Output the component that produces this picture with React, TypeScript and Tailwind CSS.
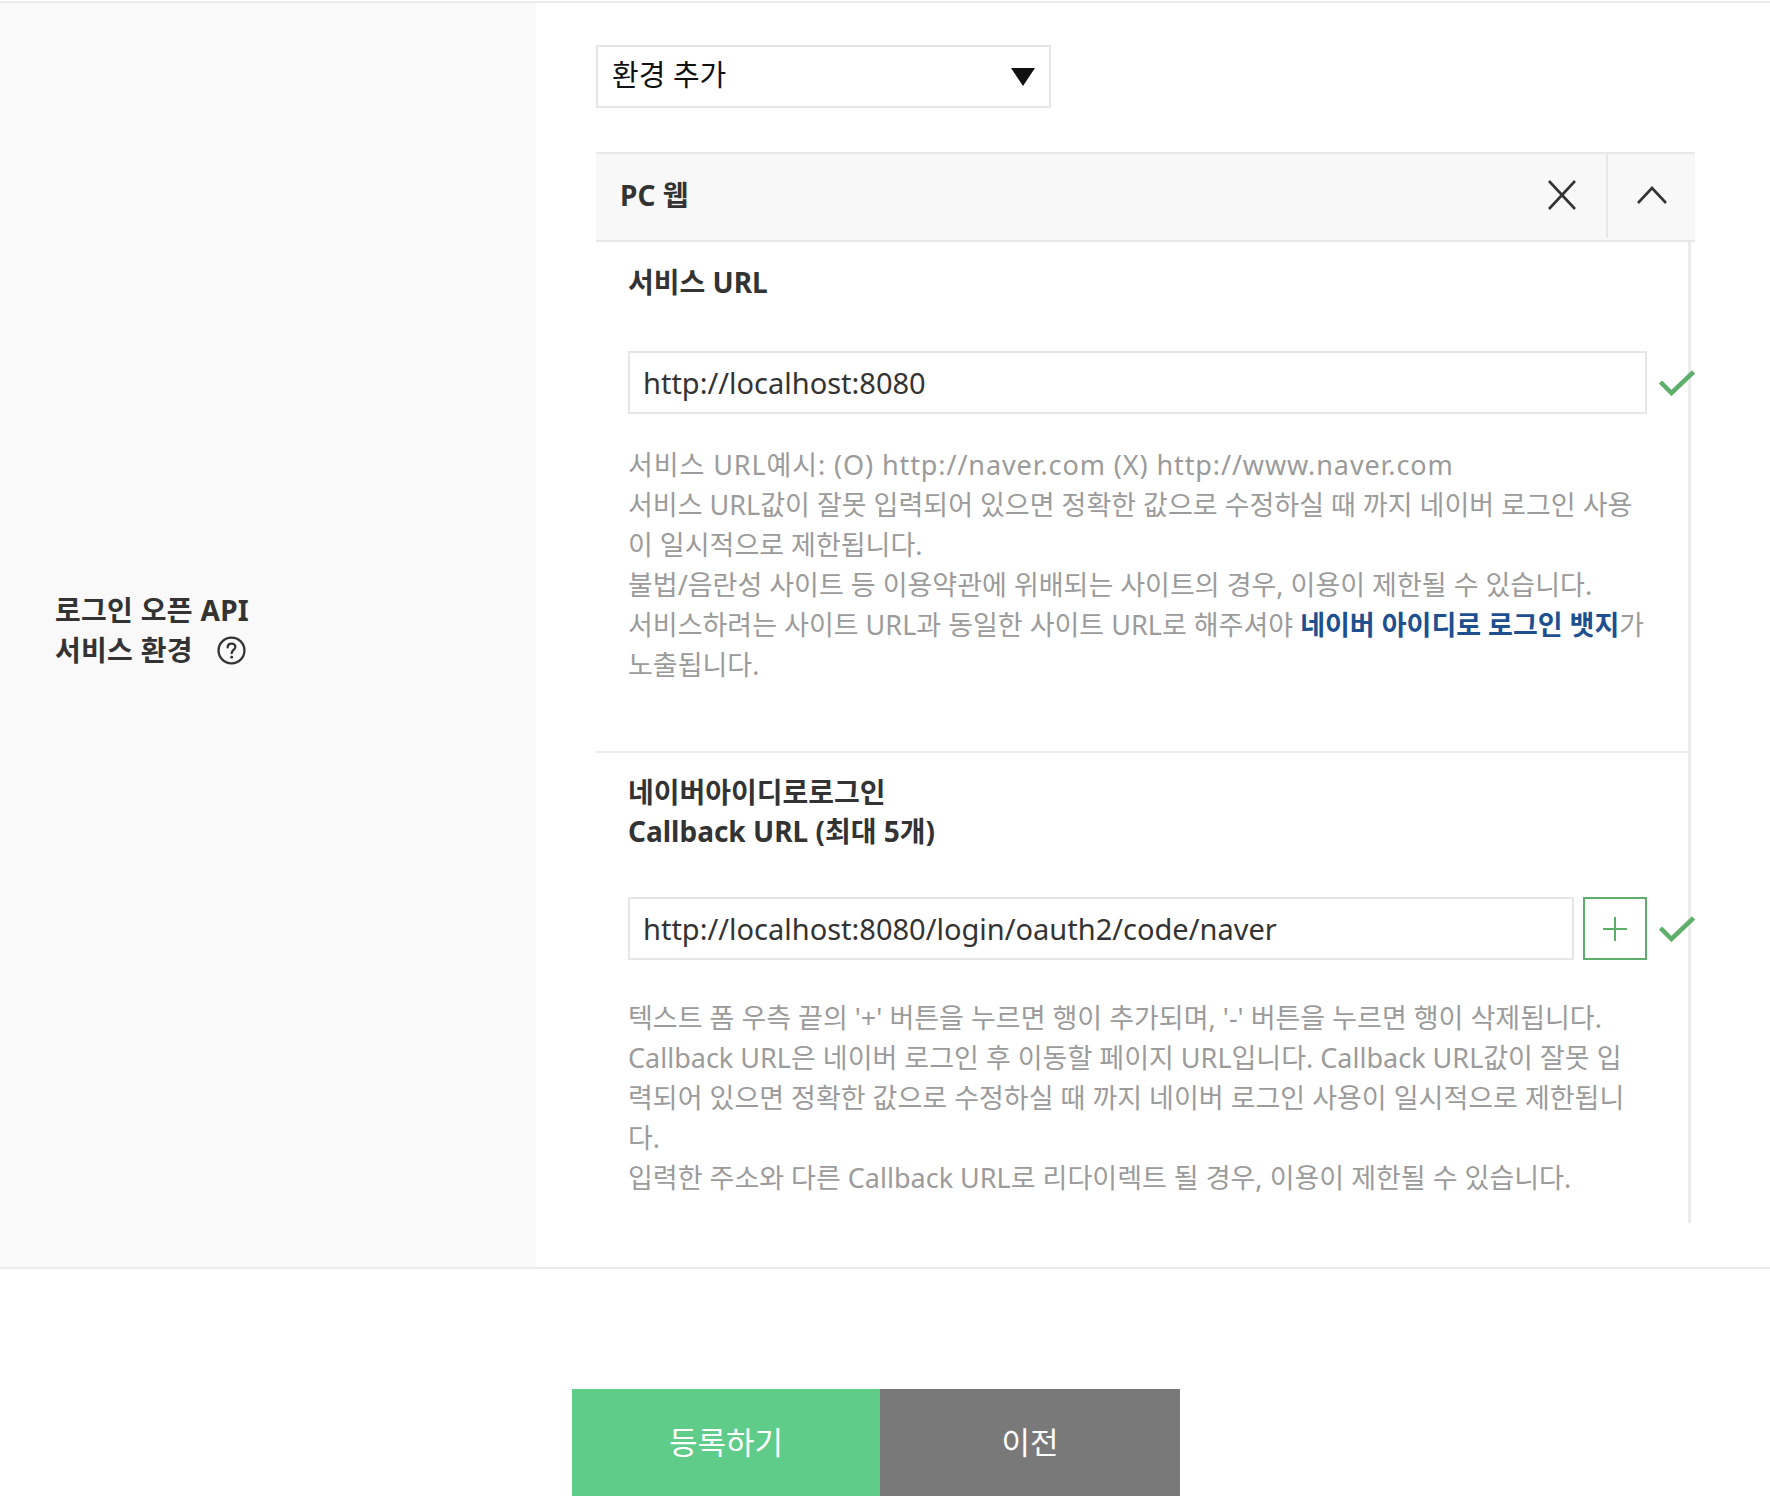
import React from "react";

const CheckMark = () => (
  <svg className="shrink-0" width="36" height="26" viewBox="0 0 36 26" fill="none">
    <path d="M1.5 12 L12.5 23 L34.5 2" stroke="#5fae6c" strokeWidth="4.5" />
  </svg>
);

const desc1 = [
  "서비스 URL값이 잘못 입력되어 있으면 정확한 값으로 수정하실 때 까지 네이버 로그인 사용",
  "이 일시적으로 제한됩니다.",
  "불법/음란성 사이트 등 이용약관에 위배되는 사이트의 경우, 이용이 제한될 수 있습니다.",
];

const desc2 = [
  "텍스트 폼 우측 끝의 '+' 버튼을 누르면 행이 추가되며, '-' 버튼을 누르면 행이 삭제됩니다.",
  "Callback URL은 네이버 로그인 후 이동할 페이지 URL입니다. Callback URL값이 잘못 입",
  "력되어 있으면 정확한 값으로 수정하실 때 까지 네이버 로그인 사용이 일시적으로 제한됩니",
  "다.",
  "입력한 주소와 다른 Callback URL로 리다이렉트 될 경우, 이용이 제한될 수 있습니다.",
];

export default function App() {
  return (
    <div className="w-[1770px] min-h-[1498px] bg-white text-[#333] font-['Noto_Sans','Noto_Sans_CJK_KR',sans-serif]">
      <div className="mt-px flex border-t-2 border-b-2 border-[#ebebeb]">
        {/* Left label */}
        <div className="w-[536px] shrink-0 bg-[#f9f9f9] flex items-center pl-[55px] pb-[10px]">
          <div className="text-[28px] font-bold leading-[40px] tracking-[0.3px]">
            <div>로그인 오픈 API</div>
            <div className="flex items-center">
              서비스 환경
              <svg className="ml-[24px]" width="29" height="29" viewBox="0 0 28 28" fill="none">
                <circle cx="14" cy="14" r="12.5" stroke="#333" strokeWidth="2.2" />
                <path d="M10.3 11 C10.3 8.6 12 7.4 14 7.4 C16.1 7.4 17.7 8.7 17.7 10.7 C17.7 13.4 14.2 13.6 14.2 16.6" stroke="#333" strokeWidth="2.2" strokeLinecap="round" />
                <circle cx="14.2" cy="20.4" r="1.4" fill="#333" />
              </svg>
            </div>
          </div>
        </div>

        {/* Right form */}
        <div className="flex-1 pl-[60px] pr-[75px] pt-[42px] pb-[44px]">
          <div className="w-[455px] h-[63px] border-2 border-[#e6e6e6] flex items-center justify-between pl-[14px] pr-[14px]">
            <span className="text-[29px] leading-[40px] text-[#111] -mt-[3px]">환경 추가</span>
            <svg width="24" height="18" viewBox="0 0 24 18">
              <path d="M0 0 H24 L12 18 Z" fill="#111" />
            </svg>
          </div>

          {/* Accordion header */}
          <div className="mt-[44px] h-[90px] bg-[#f8f8f8] border-t-2 border-b-2 border-[#e8e8e8] flex items-center">
            <span className="flex-1 pl-[24px] text-[28px] font-bold text-[#333] -mt-[4px]">PC 웹</span>
            <div className="w-[89px] h-full flex items-center justify-center -mt-[4px]">
              <svg width="30" height="30" viewBox="0 0 30 30" fill="none">
                <path d="M2 1 L28 29 M28 1 L2 29" stroke="#333" strokeWidth="2.6" />
              </svg>
            </div>
            <div className="w-[89px] h-full border-l-2 border-[#e8e8e8] flex items-center justify-center -mt-[4px]">
              <svg width="32" height="18" viewBox="0 0 32 18" fill="none">
                <path d="M2 17 L16 2 L30 17" stroke="#333" strokeWidth="2.6" />
              </svg>
            </div>
          </div>

          {/* Accordion body */}
          <div className="mr-[4px] border-r-[3px] border-[#ececec]">
            <div className="pl-[32px] pt-[20px] pb-[66px] border-b-2 border-[#ebebeb]">
              <div className="text-[28px] font-bold leading-[40px]">서비스 URL</div>
              <div className="mt-[49px] flex items-center">
                <div className="flex-1 h-[63px] border-2 border-[#e6e6e6] flex items-center pl-[13px] text-[29px] text-[#333]">
                  http://localhost:8080
                </div>
                <div className="w-[41px] shrink-0 pl-[12px] flex items-center">
                  <CheckMark />
                </div>
              </div>
              <div className="mt-[31px] text-[27px] leading-[40px] text-[#9b9b9b] whitespace-nowrap">
                <div className="tracking-[0.9px]">서비스 URL예시: (O) http://naver.com (X) http://www.naver.com</div>
                {desc1.map((line) => (
                  <div key={line}>{line}</div>
                ))}
                <div>
                  서비스하려는 사이트 URL과 동일한 사이트 URL로 해주셔야{" "}
                  <span className="font-bold text-[#1e4f8f]">네이버 아이디로 로그인 뱃지</span>가
                </div>
                <div>노출됩니다.</div>
              </div>
            </div>

            <div className="pl-[32px] pt-[20px] pb-[25px]">
              <div className="text-[28px] font-bold leading-[39px]">
                <div>네이버아이디로로그인</div>
                <div>Callback URL (최대 5개)</div>
              </div>
              <div className="mt-[46px] flex items-center">
                <div className="flex-1 h-[63px] border-2 border-[#e6e6e6] flex items-center pl-[13px] text-[29px] text-[#333]">
                  http://localhost:8080/login/oauth2/code/naver
                </div>
                <button className="ml-[9px] w-[64px] h-[63px] border-2 border-[#5fae6c] flex items-center justify-center">
                  <svg width="24" height="24" viewBox="0 0 24 24" fill="none">
                    <path d="M12 0 V24 M0 12 H24" stroke="#5fae6c" strokeWidth="2" />
                  </svg>
                </button>
                <div className="w-[41px] shrink-0 pl-[12px] flex items-center">
                  <CheckMark />
                </div>
              </div>
              <div className="mt-[38px] text-[27px] leading-[40px] text-[#9b9b9b] whitespace-nowrap">
                {desc2.map((line) => (
                  <div key={line}>{line}</div>
                ))}
              </div>
            </div>
          </div>
        </div>
      </div>

      {/* Buttons */}
      <div className="mt-[120px] flex justify-center pr-[18px]">
        <button className="w-[308px] h-[107px] bg-[#5fcc89] text-white text-[31px]">등록하기</button>
        <button className="w-[300px] h-[107px] bg-[#797979] text-white text-[31px]">이전</button>
      </div>
    </div>
  );
}
